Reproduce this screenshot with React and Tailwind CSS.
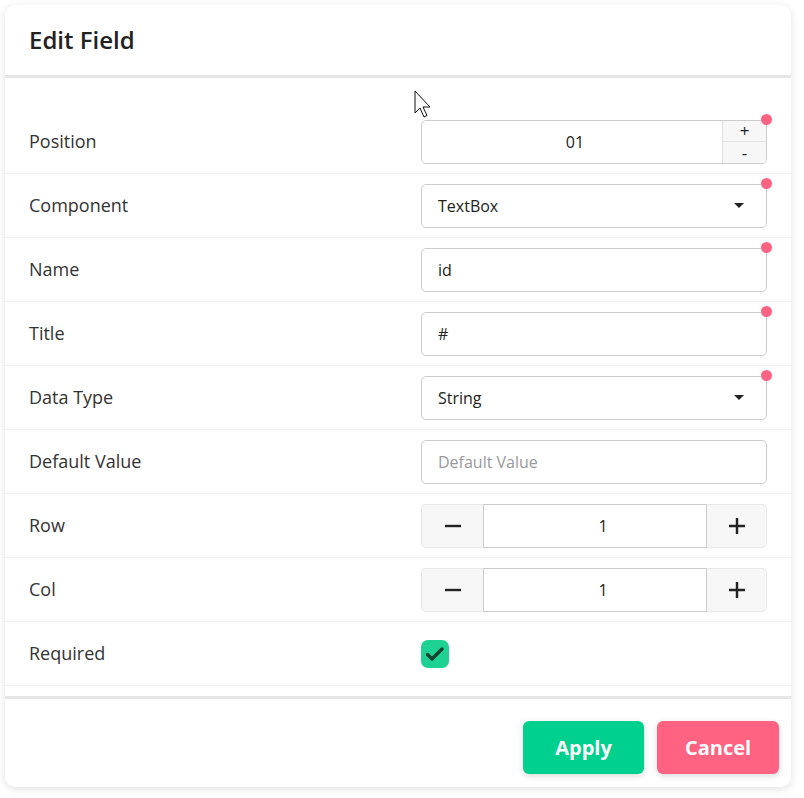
const font = { fontFamily: '"Open Sans", "Noto Sans", sans-serif' };

function RequiredDot() {
  return <span className="absolute -top-[6px] -right-[5px] w-[11px] h-[11px] rounded-full bg-[#ff6384]" />;
}

function TextInput({ value, placeholder, required }) {
  return (
    <div className="relative w-[346px] h-[44px]">
      <div className="h-full border border-[#cccccc] rounded-[5px] flex items-center pl-[16px] text-[16px]">
        {value ? <span className="text-[#222]">{value}</span> : <span className="text-[#999]">{placeholder}</span>}
      </div>
      {required && <RequiredDot />}
    </div>
  );
}

function SelectInput({ value }) {
  return (
    <div className="relative w-[346px] h-[44px]">
      <div className="h-full border border-[#cccccc] rounded-[5px] flex items-center justify-between pl-[16px] pr-[22px] text-[16px] text-[#222]">
        <span>{value}</span>
        <span className="w-0 h-0 border-l-[5px] border-r-[5px] border-t-[5px] border-l-transparent border-r-transparent border-t-[#222]" />
      </div>
      <RequiredDot />
    </div>
  );
}

function SpinInput({ value }) {
  return (
    <div className="relative w-[346px] h-[44px]">
      <div className="h-full border border-[#cccccc] rounded-[5px] flex overflow-hidden">
        <div className="flex-1 flex items-center justify-center pl-[6px] text-[16px] text-[#222]">{value}</div>
        <div className="w-[44px] flex flex-col border-l border-[#e2e2e2] bg-[#f7f7f7]">
          <div className="flex-1 flex items-center justify-center border-b border-[#e2e2e2] text-[17px] leading-none text-[#222]">+</div>
          <div className="flex-1 flex items-center justify-center text-[17px] leading-none text-[#222]">-</div>
        </div>
      </div>
      <RequiredDot />
    </div>
  );
}

function Stepper({ value }) {
  return (
    <div className="w-[346px] h-[44px] flex">
      <div className="w-[62px] flex items-center justify-center bg-[#f7f7f7] border border-r-0 border-[#e8e8e8] rounded-l-[5px]">
        <svg width="18" height="18" viewBox="0 0 18 18"><path d="M1 9h16" stroke="#222" strokeWidth="2.4" /></svg>
      </div>
      <div className="flex-1 flex items-center justify-center pl-4 border border-[#cccccc] text-[16px] text-[#222]">{value}</div>
      <div className="w-[60px] flex items-center justify-center bg-[#f7f7f7] border border-l-0 border-[#e8e8e8] rounded-r-[5px]">
        <svg width="18" height="18" viewBox="0 0 18 18"><path d="M1 9h16M9 1v16" stroke="#222" strokeWidth="2.4" /></svg>
      </div>
    </div>
  );
}

function Row({ label, children }) {
  return (
    <div className="h-16 flex items-center pl-6 pr-6 border-b border-[#f0f0f0]">
      <div className="flex-1 text-[18px] text-[#333]">{label}</div>
      <div className="w-[346px]">{children}</div>
    </div>
  );
}

export default function App() {
  return (
    <div className="w-[804px] h-[798px] bg-white p-[5px] relative" style={font}>
      <div className="w-[786px] h-[782px] bg-white rounded-[10px] shadow-[0_2px_8px_rgba(0,0,0,0.12)] flex flex-col overflow-hidden">
        <div className="h-[73px] shrink-0 flex items-center px-6 border-b-[3px] border-[#e6e6e6]">
          <h1 className="text-[24px] font-semibold text-[#222]">Edit Field</h1>
        </div>
        <div className="pt-8 pb-[10px]">
          <Row label="Position"><SpinInput value="01" /></Row>
          <Row label="Component"><SelectInput value="TextBox" /></Row>
          <Row label="Name"><TextInput value="id" required /></Row>
          <Row label="Title"><TextInput value="#" required /></Row>
          <Row label="Data Type"><SelectInput value="String" /></Row>
          <Row label="Default Value"><TextInput placeholder="Default Value" /></Row>
          <Row label="Row"><Stepper value="1" /></Row>
          <Row label="Col"><Stepper value="1" /></Row>
          <Row label="Required">
            <div className="w-[28px] h-[28px] rounded-[7px] bg-[#1ed294] flex items-center justify-center">
              <svg width="28" height="28" viewBox="0 0 28 28"><path d="M6.5 14.5l4.5 4.5 10-10" fill="none" stroke="#0d4330" strokeWidth="3.4" strokeLinecap="round" strokeLinejoin="round" /></svg>
            </div>
          </Row>
        </div>
        <div className="flex-1 border-t-[3px] border-[#e6e6e6] flex justify-end items-start gap-[13px] pt-[22px] pr-[12px]">
          <button className="w-[121px] h-[53px] rounded-[6px] bg-[#00d08e] text-white text-[20px] font-bold shadow-[0_2px_6px_rgba(0,0,0,0.15)]">Apply</button>
          <button className="w-[122px] h-[53px] rounded-[6px] bg-[#ff6381] text-white text-[20px] font-bold shadow-[0_2px_6px_rgba(0,0,0,0.15)]">Cancel</button>
        </div>
      </div>
      <svg className="absolute left-[414px] top-[90px]" width="20" height="30" viewBox="0 0 20 30">
        <path d="M1 1v22l5-5 4 9 3-1.5-4-8.5h7z" fill="white" stroke="#111" strokeWidth="1" strokeLinejoin="round" />
      </svg>
    </div>
  );
}
